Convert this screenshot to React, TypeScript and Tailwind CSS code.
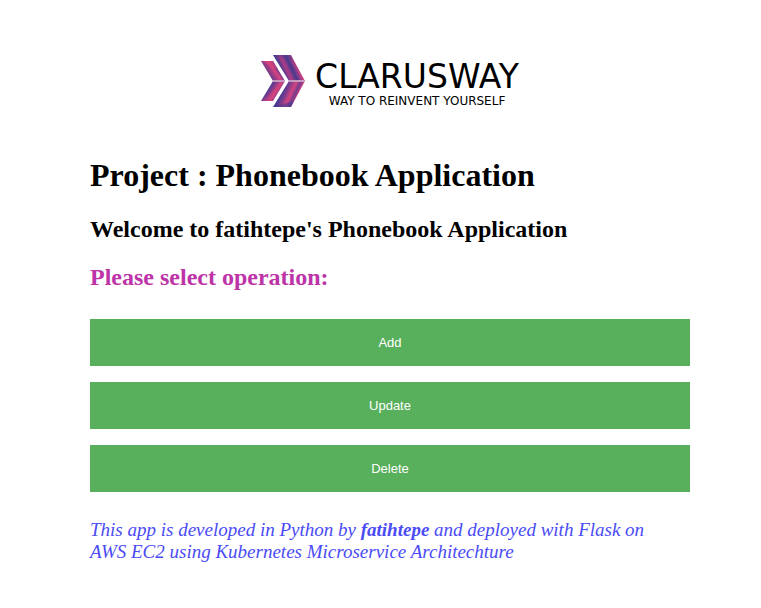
const operations = ["Add", "Update", "Delete"];

function ChevronMark() {
  return (
    <svg viewBox="0 0 44 52" className="h-[52px] w-11 shrink-0" aria-hidden="true">
      <defs>
        <linearGradient id="smallTop" gradientUnits="userSpaceOnUse" x1="7" y1="19" x2="17" y2="12">
          <stop offset="0" stopColor="#6a3c8a" />
          <stop offset="0.35" stopColor="#a33c86" />
          <stop offset="0.6" stopColor="#d9437f" />
          <stop offset="1" stopColor="#413b8f" />
        </linearGradient>
        <linearGradient id="smallBottom" gradientUnits="userSpaceOnUse" x1="6" y1="34" x2="17" y2="41">
          <stop offset="0" stopColor="#443b92" />
          <stop offset="0.35" stopColor="#853b8b" />
          <stop offset="0.65" stopColor="#d8447f" />
          <stop offset="1" stopColor="#633b8f" />
        </linearGradient>
        <linearGradient id="largeTop" gradientUnits="userSpaceOnUse" x1="21" y1="16" x2="36" y2="9">
          <stop offset="0" stopColor="#403a8e" />
          <stop offset="0.3" stopColor="#b03c86" />
          <stop offset="0.6" stopColor="#453a8e" />
          <stop offset="0.8" stopColor="#923c89" />
          <stop offset="1" stopColor="#df4582" />
        </linearGradient>
        <linearGradient id="largeBottom" gradientUnits="userSpaceOnUse" x1="21" y1="36" x2="36" y2="43">
          <stop offset="0" stopColor="#413a90" />
          <stop offset="0.3" stopColor="#863b8c" />
          <stop offset="0.55" stopColor="#d54482" />
          <stop offset="0.8" stopColor="#733b8c" />
          <stop offset="1" stopColor="#d9417f" />
        </linearGradient>
      </defs>
      <path d="M0 6H12L24 26H12Z" fill="url(#smallTop)" />
      <path d="M12 26H24L12 46H0Z" fill="url(#smallBottom)" />
      <path d="M0 6H12L17 14Z" fill="#df427e" opacity="0.6" />
      <path d="M0 46L24 26L12 46Z" fill="#df427e" opacity="0.3" />
      <path d="M12 0H30L44 26H28Z" fill="url(#largeTop)" />
      <path d="M28 26H44L30 52H12Z" fill="url(#largeBottom)" />
      <path d="M12 0H30L33 6Z" fill="#433a91" opacity="0.3" />
      <path d="M12 52H30L33 46Z" fill="#433a91" opacity="0.6" />
      <path d="M12 26H24M28 26H44" stroke="#c69abf" strokeWidth="2" />
    </svg>
  );
}

export default function App() {
  return (
    <main className="bg-white pt-[55px] pr-[71px] pb-10 pl-[90px] font-['Liberation_Serif',serif] text-black">
      <header className="flex justify-center gap-2.5">
        <ChevronMark />
        <div className="flex flex-col items-center pt-1.5 font-['DejaVu_Sans',sans-serif]">
          <span className="text-[33px] leading-8">CLARUSWAY</span>
          <span className="text-[12px] leading-4">WAY TO REINVENT YOURSELF</span>
        </div>
      </header>
      <h1 className="mt-[50px] text-[32px] leading-8 font-bold">Project : Phonebook Application</h1>
      <h2 className="mt-6 text-2xl leading-7 font-bold">Welcome to fatihtepe's Phonebook Application</h2>
      <h2 className="mt-5 text-2xl leading-7 font-bold text-[#bd34a8]">Please select operation:</h2>
      <nav className="mt-7 flex flex-col gap-4">
        {operations.map((name) => (
          <button
            key={name}
            type="button"
            className="h-[47px] w-full cursor-pointer bg-[#58af5c] font-['Liberation_Sans',sans-serif] text-[13px] text-white"
          >
            {name}
          </button>
        ))}
      </nav>
      <p className="mt-[27px] pr-5 text-[19px] leading-[22px] text-[#4b4bf5] italic">
        This app is developed in Python by <b>fatihtepe</b> and deployed with Flask on AWS EC2 using Kubernetes
        Microservice Architechture
      </p>
    </main>
  );
}
